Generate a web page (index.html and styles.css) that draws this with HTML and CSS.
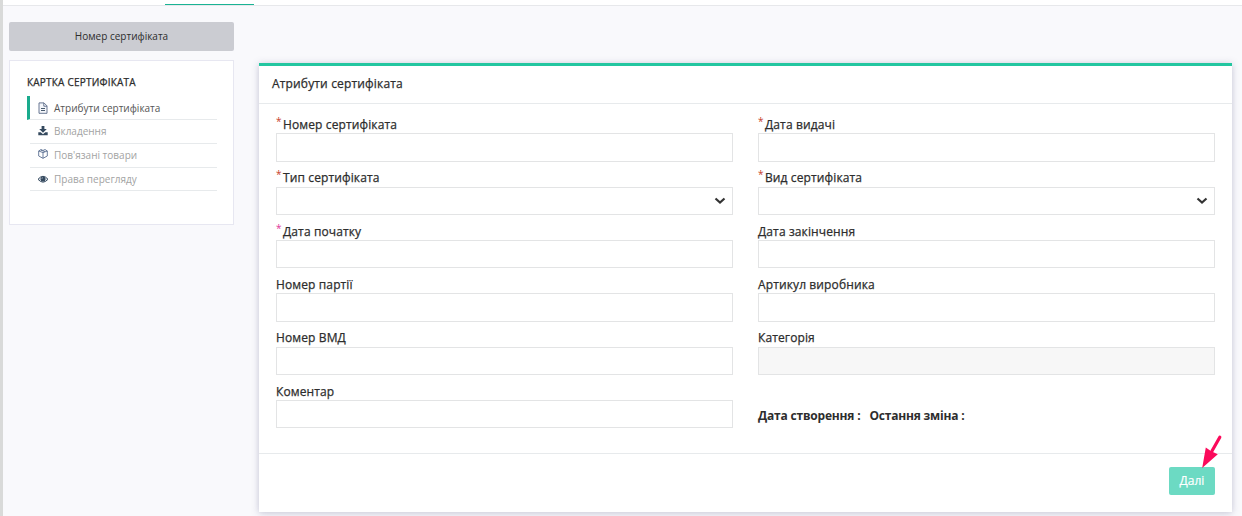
FILE: index.html
```
<!DOCTYPE html>
<html lang="uk">
<head>
<meta charset="utf-8">
<title>Атрибути сертифіката</title>
<link rel="stylesheet" href="styles.css">
</head>
<body>
<div class="page">
  <header class="topbar"><span class="active-tab"></span></header>
  <div class="layout">
    <aside class="sidebar">
      <div class="number-box">Номер сертифіката</div>
      <nav class="menu">
        <h2 class="menu-title">КАРТКА СЕРТИФІКАТА</h2>
        <ul class="menu-list">
          <li class="menu-item active">
            <svg class="icon" viewBox="0 0 12 12"><path d="M2 .9h5l3 3v7.400H2z M6.800 1v3.200H10" fill="#f4f6fa" stroke="#596a88" stroke-width=".9"/><path d="M4 6.500h4M4 8.500h4" stroke="#34495e" stroke-width=".9"/></svg>
            <span>Атрибути сертифіката</span></li>
          <li class="menu-item">
            <svg class="icon" viewBox="0 0 12 12"><path d="M4.600 1h2.800v3h2.400L6 7.700 2.200 4h2.400z M1.300 7.200h2.400L6 9.200l2.300-2h2.400v3.100H1.300z" fill="#34495e"/></svg>
            <span>Вкладення</span></li>
          <li class="menu-item">
            <svg class="icon cube" viewBox="0 0 12 12"><path d="M1.700 3L4 1.500 6 2.500 8 1.500 10.300 3v5L6 10.300 1.700 8z M1.700 3L6 4.600 10.300 3 M6 4.600v5.700 M3.800 2.200L8 3.600" fill="none" stroke="#5b6f92" stroke-width=".9"/></svg>
            <span>Пов'язані товари</span></li>
          <li class="menu-item">
            <svg class="icon" viewBox="0 0 12 12"><path d="M1 6.300Q6 .3 11 6.300Q6 12 1 6.300z" fill="#dfe4eb" stroke="#34495e" stroke-width="1"/><circle cx="6" cy="5.900" r="2.500" fill="#34495e"/><path d="M4.800 5.700Q5 4.700 6 4.600" stroke="#dfe4eb" stroke-width=".6" fill="none"/></svg>
            <span>Права перегляду</span></li>
        </ul>
      </nav>
    </aside>
    <main class="card">
      <h1 class="card-title">Атрибути сертифіката</h1>
      <form class="fields">
        <div class="field"><label class="label"><i class="req">*</i>Номер сертифіката</label><div class="input"></div></div>
        <div class="field"><label class="label"><i class="req">*</i>Дата видачі</label><div class="input"></div></div>
        <div class="field"><label class="label"><i class="req">*</i>Тип сертифіката</label><div class="input select"><svg class="chevron" viewBox="0 0 12 8"><path d="M1.500 1.500L6 5.500l4.500-4"/></svg></div></div>
        <div class="field"><label class="label"><i class="req">*</i>Вид сертифіката</label><div class="input select"><svg class="chevron" viewBox="0 0 12 8"><path d="M1.500 1.500L6 5.500l4.500-4"/></svg></div></div>
        <div class="field"><label class="label"><i class="req pink">*</i>Дата початку</label><div class="input"></div></div>
        <div class="field"><label class="label">Дата закінчення</label><div class="input"></div></div>
        <div class="field"><label class="label">Номер партії</label><div class="input"></div></div>
        <div class="field"><label class="label">Артикул виробника</label><div class="input"></div></div>
        <div class="field"><label class="label">Номер ВМД</label><div class="input"></div></div>
        <div class="field"><label class="label">Категорія</label><div class="input disabled"></div></div>
        <div class="field"><label class="label">Коментар</label><div class="input"></div></div>
        <div class="dates"><b>Дата створення :</b><b>Остання зміна :</b></div>
      </form>
      <footer class="card-footer">
        <button class="next">Далі</button>
        <svg class="arrow" viewBox="0 0 22 34"><path d="M18.800 2.200L11 16" stroke="#fb0a5b" stroke-width="3.200" stroke-linecap="round"/><path d="M1.200 33L4.800 12.600 10.200 16.300 16.800 19.300z" fill="#fb0a5b"/></svg>
      </footer>
    </main>
  </div>
</div>
</body>
</html>
```
FILE: styles.css
```
* { box-sizing: border-box; }
body {
  margin: 0;
  background: #f9f9fc;
  font-family: "Open Sans", "Noto Sans", sans-serif;
  color: #2d2d2d;
}
.page {
  height: 516px;
  overflow: hidden;
  border-left: 3px solid #d9dad9;
}
.topbar {
  height: 6px;
  padding: 4px 0 0 162px;
  background: #fff;
  border-bottom: 1px solid #e7e8eb;
}
.active-tab {
  display: block;
  width: 89px;
  height: 1px;
  background: #1ab394;
}
.layout {
  display: flex;
  align-items: flex-start;
  gap: 25px;
  padding: 16px 10px 0 6px;
}
.sidebar { width: 225px; }
.number-box {
  height: 29px;
  margin-bottom: 9px;
  border-radius: 2px;
  background: #cbccd2;
  font-size: 10px;
  line-height: 29px;
  text-align: center;
}
.menu {
  height: 165px;
  padding: 15px 16px 0 17px;
  background: #fff;
  border: 1px solid #e7e7f1;
}
.menu-title {
  height: 13px;
  margin: 0 0 7px;
  font-size: 10px;
  font-weight: 500;
  line-height: 13px;
  letter-spacing: .21px;
  white-space: nowrap;
  -webkit-text-stroke: .25px;
}
.menu-list {
  margin: 0;
  padding: 0;
  list-style: none;
}
.menu-item {
  display: flex;
  align-items: center;
  gap: 5px;
  height: 24px;
  margin-left: 3px;
  padding: 0 0 1px 7px;
  border-bottom: 1px solid #e7eaec;
  font-size: 10px;
  color: #a3a3a3;
  white-space: nowrap;
}
.menu-item.active {
  margin-left: 0;
  padding: 0 0 0 7px;
  border-left: 3px solid #1aab8d;
  color: #555;
}
.menu-item:last-child {
  height: 23px;
  padding-bottom: 0;
}
.icon { width: 12px; height: 12px; }
.cube { margin-bottom: 2px; }
.card {
  width: 973px;
  height: 449px;
  margin-top: 41px;
  background: #fff;
  border-top: 3px solid #23c6a0;
  box-shadow: 0 1px 7px rgba(90, 90, 135, .34);
}
.card-title {
  height: 38px;
  margin: 0;
  padding-left: 13px;
  border-bottom: 1px solid #e7eaec;
  font-size: 12px;
  font-weight: 500;
  line-height: 36px;
  letter-spacing: .16px;
  -webkit-text-stroke: .25px;
}
.fields {
  display: grid;
  grid-template-columns: 457px 457px;
  grid-auto-rows: 53.33px;
  column-gap: 25px;
  height: 349px;
  padding: 12px 17px 0;
}
.label {
  display: flex;
  height: 17.33px;
  font-size: 12px;
  font-weight: 500;
  line-height: 17px;
  letter-spacing: .12px;
  white-space: nowrap;
  -webkit-text-stroke: .25px;
}
.req {
  width: 7px;
  font-size: 10px;
  font-style: normal;
  font-weight: 400;
  line-height: 10px;
  color: #c63d2b;
  -webkit-text-stroke: 0;
}
.req.pink { color: #e0359a; }
.input {
  height: 28.4px;
  border: 1px solid #e3e4e5;
  background: #fff;
}
.select {
  display: flex;
  align-items: center;
  justify-content: flex-end;
  padding-right: 6px;
}
.chevron {
  width: 12px;
  height: 8px;
  fill: none;
  stroke: #333;
  stroke-width: 2.2;
}
.disabled { background: #f7f7f7; }
.dates {
  display: flex;
  gap: 9px;
  padding-top: 24px;
  font-size: 12px;
  line-height: 18px;
  letter-spacing: -.19px;
  white-space: nowrap;
}
.dates b { font-weight: 700; }
.card-footer {
  position: relative;
  display: flex;
  justify-content: flex-end;
  padding: 13px 17px 0;
  border-top: 1px solid #e7eaec;
}
.next {
  width: 46px;
  height: 28px;
  padding: 0;
  border: 0;
  border-radius: 2px;
  background: #6cdac3;
  color: #fff;
  font: 500 12px/28px "Open Sans", "Noto Sans", sans-serif;
  -webkit-text-stroke: .2px;
}
.arrow {
  position: absolute;
  top: -19px;
  right: 9px;
  width: 22px;
  height: 34px;
}
```
